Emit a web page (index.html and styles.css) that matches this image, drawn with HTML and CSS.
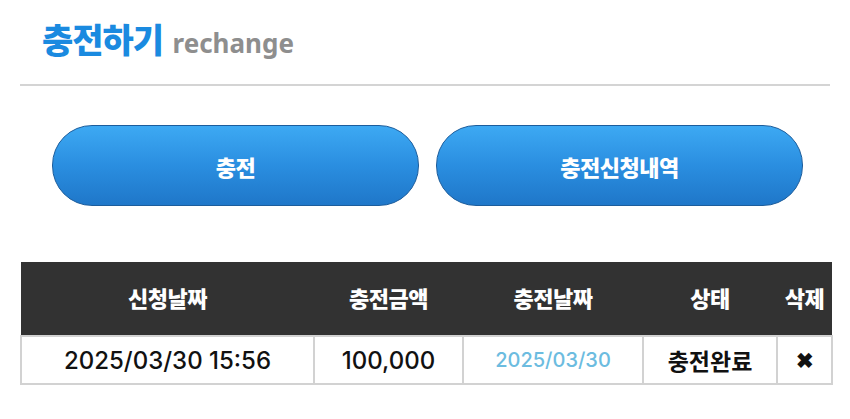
FILE: index.html
```html
<!DOCTYPE html>
<html>
<head>
	<title>충전하기</title>
	<meta http-equiv="content-type" content="text/html; charset=utf-8" />
	<link rel="stylesheet" href="styles.css">
</head>
<body>
	<div class="wrap">
		<h2 class="title"><span class="ko">충전하기</span> <span class="en">rechange</span></h2>

		<div class="btns">
			<a class="btn" href="#">충전</a>
			<a class="btn" href="#">충전신청내역</a>
		</div>

		<table class="list">
			<colgroup>
				<col class="c1"><col class="c2"><col class="c3"><col class="c4"><col class="c5">
			</colgroup>
			<thead>
				<tr>
					<th>신청날짜</th>
					<th>충전금액</th>
					<th>충전날짜</th>
					<th>상태</th>
					<th>삭제</th>
				</tr>
			</thead>
			<tbody>
				<tr>
					<td>2025/03/30 15:56</td>
					<td>100,000</td>
					<td class="date">2025/03/30</td>
					<td class="ko">충전완료</td>
					<td class="del">&#10006;</td>
				</tr>
			</tbody>
		</table>
	</div>
</body>
</html>
```

FILE: styles.css
```css
body {
	margin:0;
	background:#fff;
	font-family:"Noto Sans CJK KR", "Noto Sans", sans-serif;
}

.wrap {
	width:810px;
	padding:0 20px;
}

.title {
	margin:0;
	padding:14px 0 20px 22px;
	border-bottom:2px solid #d4d4d4;
	line-height:50px;
	height:50px;
}

.title .ko {
	color:#1a8ae0;
	font-size:34px;
	font-weight:900;
	letter-spacing:-1px;
}

.title .en {
	color:#8e8e8e;
	font-family:"Noto Sans", sans-serif;
	font-size:26px;
	font-weight:700;
	margin-left:4px;
}

.btns {
	display:flex;
	gap:17px;
	padding:39px 0 0 32px;
}

.btn {
	display:flex;
	align-items:center;
	justify-content:center;
	width:365px;
	height:79px;
	border:1px solid #1c5d9c;
	border-radius:40px;
	background:linear-gradient(#3da9f3, #2a8ee0 50%, #1f77c9);
	color:#fff;
	font-size:22px;
	font-weight:900;
	letter-spacing:-0.5px;
	text-decoration:none;
}

.list {
	margin-top:56px;
	width:811px;
	border-collapse:collapse;
	table-layout:fixed;
}

.c1 { width:293px; }
.c2 { width:149px; }
.c3 { width:180px; }
.c4 { width:134px; }
.c5 { width:55px; }

.list th {
	height:70px;
	background:#323232;
	color:#fff;
	font-size:22px;
	font-weight:900;
	letter-spacing:-0.5px;
	padding:0 0 3px;
}

.list td {
	height:46px;
	border:2px solid #d2d2d2;
	text-align:center;
	font-family:"Inter", "Noto Sans CJK KR", sans-serif;
	font-size:24px;
	font-weight:500;
	color:#111;
	padding:0;
}

.list td.date {
	color:#6cbce0;
	font-size:20px;
	font-weight:500;
}

.list td.ko {
	font-size:23px;
	font-weight:700;
}

.list td.del {
	font-size:21px;
	font-weight:900;
}
```
